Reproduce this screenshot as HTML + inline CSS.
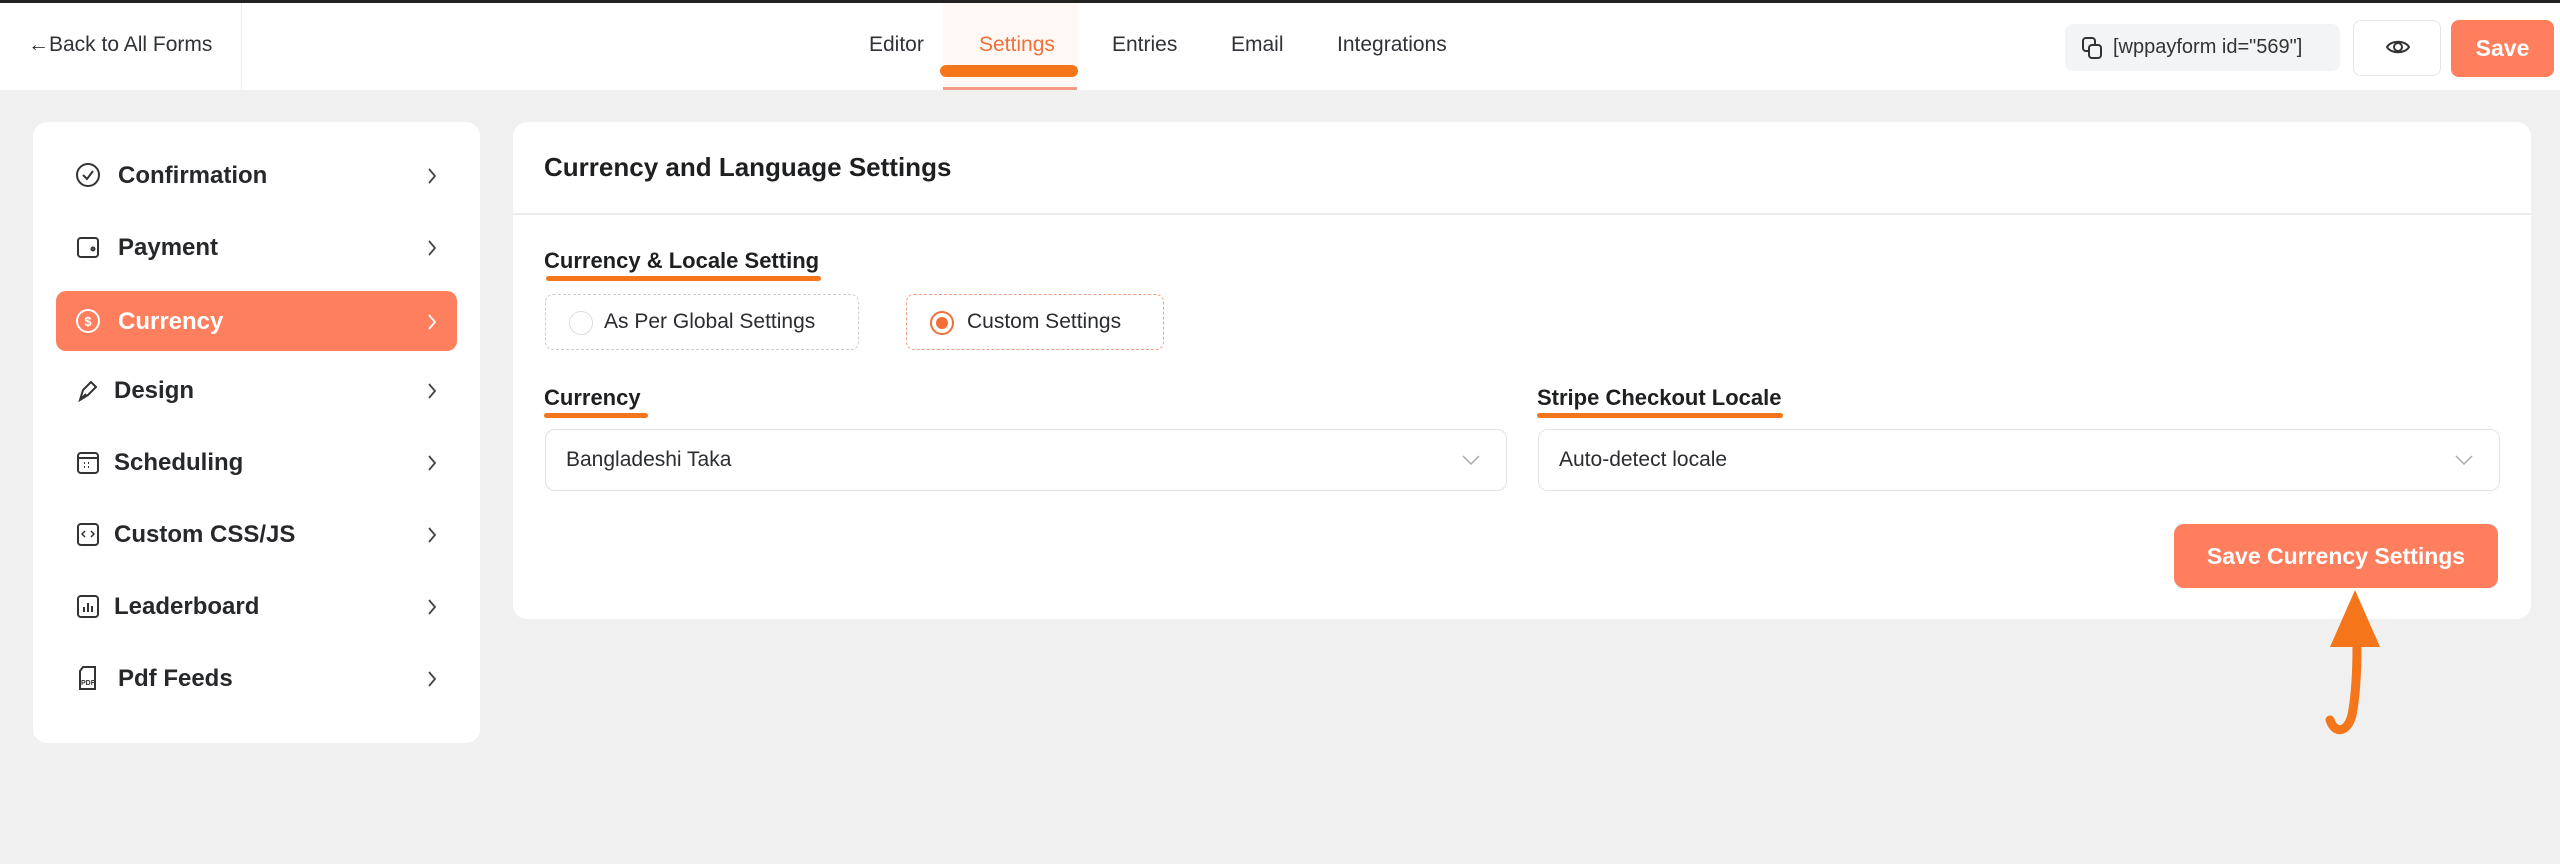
<!DOCTYPE html>
<html><head><meta charset="utf-8"><style>
*{box-sizing:border-box;margin:0;padding:0}
body{width:2560px;height:864px;background:#f0f0f0;font-family:"Liberation Sans",sans-serif;color:#1e1f21;position:relative;overflow:hidden}
.a{position:absolute}
.top{left:0;top:0;width:2560px;height:90px;background:#fff;border-top:3px solid #222}
.tab{top:30px;font-size:21px;color:#2f3237}
.side{left:33px;top:122px;width:447px;height:621px;background:#fff;border-radius:14px}
.it{left:56px;width:401px;height:60px;border-radius:10px;font-size:24px;font-weight:bold;color:#26282c}
.it span.t{position:absolute;left:62px;top:17px}
.it .ch{position:absolute;left:370px;top:21px}
.it .ic{position:absolute;left:18px;top:16px}
.card{left:513px;top:122px;width:2018px;height:497px;background:#fff;border-radius:14px}
.lbl{font-size:22px;font-weight:bold;color:#1e1f21}
.ul{height:5px;background:#f5761a;border-radius:3px}
.radio{height:56px;border:1.5px dashed #d0cbc8;border-radius:8px;font-size:21px;color:#2a2c30}
.sel{height:62px;border:1.5px solid #e2e2e2;border-radius:10px;font-size:21px;color:#2a2c30}
</style></head><body>
<div class="a top">
 <div class="a" style="left:0;top:0;width:242px;height:87px;border-right:1px solid #eee"></div>
 <div class="a" style="left:28px;top:30px;font-size:21px;color:#2f3237">&#8592;Back to All Forms</div>
 <div class="a" style="left:943px;top:0;width:134px;height:87px;background:#fff8f4"></div>
 <div class="a tab" style="left:869px">Editor</div>
 <div class="a tab" style="left:979px;color:#f26f3a">Settings</div>
 <div class="a" style="left:940px;top:62px;width:138px;height:12px;background:#f5761a;border-radius:6px"></div>
 <div class="a" style="left:943px;top:84px;width:134px;height:3px;background:#f39b85"></div>
 <div class="a tab" style="left:1112px">Entries</div>
 <div class="a tab" style="left:1231px">Email</div>
 <div class="a tab" style="left:1337px">Integrations</div>
 <div class="a" style="left:2065px;top:21px;width:275px;height:47px;background:#f3f4f5;border-radius:8px;font-size:19px;color:#333">
  <svg class="a" style="left:16px;top:12px" width="22" height="24" viewBox="0 0 22 24" fill="none" stroke="#333" stroke-width="2"><rect x="2" y="2" width="12" height="13" rx="3"/><rect x="8" y="9" width="12" height="13" rx="3" fill="#f3f4f5"/></svg>
  <span class="a" style="left:48px;top:12px;font-size:20px">[wppayform id="569"]</span></div>
 <div class="a" style="left:2353px;top:17px;width:88px;height:56px;border:1.5px solid #e4e4e4;border-radius:8px">
  <svg class="a" style="left:31px;top:15px" width="26" height="22" viewBox="0 0 26 22" fill="none" stroke="#333" stroke-width="2"><path d="M2 11C6 4 20 4 24 11C20 18 6 18 2 11Z"/><circle cx="13" cy="11" r="4"/></svg></div>
 <div class="a" style="left:2451px;top:17px;width:103px;height:57px;background:#fe7e5e;border-radius:8px;color:#fff;font-size:23px;font-weight:bold;text-align:center;line-height:57px">Save</div>
</div>

<div class="a side"></div>
<div class="a it" style="top:145px"><svg class="ic" width="28" height="28" viewBox="0 0 28 28" fill="none" stroke="#333" stroke-width="2"><circle cx="14" cy="14" r="11"/><path d="M9 14l4 4 6-8"/></svg><span class="t">Confirmation</span><svg class="ch" width="12" height="20" viewBox="0 0 12 20" fill="none" stroke="#444" stroke-width="1.8"><path d="M3 3l6 7-6 7"/></svg></div>
<div class="a it" style="top:217px"><svg class="ic" width="28" height="28" viewBox="0 0 28 28" fill="none" stroke="#333" stroke-width="2"><rect x="4" y="5" width="20" height="19" rx="3"/><circle cx="19" cy="16" r="1.5"/></svg><span class="t">Payment</span><svg class="ch" width="12" height="20" viewBox="0 0 12 20" fill="none" stroke="#444" stroke-width="1.8"><path d="M3 3l6 7-6 7"/></svg></div>
<div class="a it" style="top:291px;background:#fe7f5e;color:#fff"><svg class="ic" width="28" height="28" viewBox="0 0 28 28" fill="none" stroke="#fff" stroke-width="2"><circle cx="14" cy="14" r="11"/><text x="14" y="19" font-size="13" text-anchor="middle" fill="#fff" stroke="none">$</text></svg><span class="t">Currency</span><svg class="ch" width="12" height="20" viewBox="0 0 12 20" fill="none" stroke="#fff" stroke-width="1.8"><path d="M3 3l6 7-6 7"/></svg></div>
<div class="a it" style="top:360px"><svg class="ic" width="28" height="28" viewBox="0 0 28 28" fill="none" stroke="#333" stroke-width="2"><path d="M6 24l3-10 8-8 5 5-8 8z M6 24l6-6"/></svg><span class="t" style="left:58px">Design</span><svg class="ch" width="12" height="20" viewBox="0 0 12 20" fill="none" stroke="#444" stroke-width="1.8"><path d="M3 3l6 7-6 7"/></svg></div>
<div class="a it" style="top:432px"><svg class="ic" width="28" height="28" viewBox="0 0 28 28" fill="none" stroke="#333" stroke-width="2"><rect x="4" y="5" width="20" height="20" rx="3"/><path d="M4 10h20M10 15h1M14 15h1M10 19h1M14 19h1"/></svg><span class="t" style="left:58px">Scheduling</span><svg class="ch" width="12" height="20" viewBox="0 0 12 20" fill="none" stroke="#444" stroke-width="1.8"><path d="M3 3l6 7-6 7"/></svg></div>
<div class="a it" style="top:504px"><svg class="ic" width="28" height="28" viewBox="0 0 28 28" fill="none" stroke="#333" stroke-width="2"><rect x="4" y="4" width="20" height="21" rx="3"/><path d="M11 11l-3 3 3 3M17 11l3 3-3 3" stroke-width="1.5"/></svg><span class="t" style="left:58px">Custom CSS/JS</span><svg class="ch" width="12" height="20" viewBox="0 0 12 20" fill="none" stroke="#444" stroke-width="1.8"><path d="M3 3l6 7-6 7"/></svg></div>
<div class="a it" style="top:576px"><svg class="ic" width="28" height="28" viewBox="0 0 28 28" fill="none" stroke="#333" stroke-width="2"><rect x="4" y="4" width="20" height="21" rx="3"/><path d="M10 20v-5M14 20v-9M18 20v-6"/></svg><span class="t" style="left:58px">Leaderboard</span><svg class="ch" width="12" height="20" viewBox="0 0 12 20" fill="none" stroke="#444" stroke-width="1.8"><path d="M3 3l6 7-6 7"/></svg></div>
<div class="a it" style="top:648px"><svg class="ic" width="28" height="28" viewBox="0 0 28 28" fill="none" stroke="#333" stroke-width="2"><path d="M9 3h12v22H6V7z"/><text x="14" y="21" font-size="7" text-anchor="middle" fill="#333" stroke="none">PDF</text></svg><span class="t">Pdf Feeds</span><svg class="ch" width="12" height="20" viewBox="0 0 12 20" fill="none" stroke="#444" stroke-width="1.8"><path d="M3 3l6 7-6 7"/></svg></div>

<div class="a card"></div>
<div class="a" style="left:544px;top:152px;font-size:26px;font-weight:bold">Currency and Language Settings</div>
<div class="a" style="left:513px;top:213px;width:2018px;height:1.5px;background:#ececec"></div>
<div class="a lbl" style="left:544px;top:248px">Currency &amp; Locale Setting</div>
<div class="a ul" style="left:546px;top:276px;width:275px"></div>
<div class="a radio" style="left:545px;top:294px;width:314px"><div class="a" style="left:23px;top:16px;width:24px;height:24px;border:1.5px solid #ddd;border-radius:50%"></div><span class="a" style="left:58px;top:15px">As Per Global Settings</span></div>
<div class="a radio" style="left:906px;top:294px;width:258px;border-color:#f0a080"><div class="a" style="left:23px;top:16px;width:24px;height:24px;border:2px solid #f26f3a;border-radius:50%"><div class="a" style="left:4px;top:4px;width:12px;height:12px;background:#f26f3a;border-radius:50%"></div></div><span class="a" style="left:60px;top:15px">Custom Settings</span></div>
<div class="a lbl" style="left:544px;top:385px">Currency</div>
<div class="a ul" style="left:544px;top:413px;width:104px"></div>
<div class="a lbl" style="left:1537px;top:385px">Stripe Checkout Locale</div>
<div class="a ul" style="left:1537px;top:413px;width:246px"></div>
<div class="a sel" style="left:545px;top:429px;width:962px"><span class="a" style="left:20px;top:18px">Bangladeshi Taka</span><svg class="a" style="left:915px;top:24px" width="20" height="12" viewBox="0 0 20 12" fill="none" stroke="#aaa" stroke-width="1.5"><path d="M2 2l8 8 8-8"/></svg></div>
<div class="a sel" style="left:1538px;top:429px;width:962px"><span class="a" style="left:20px;top:18px">Auto-detect locale</span><svg class="a" style="left:915px;top:24px" width="20" height="12" viewBox="0 0 20 12" fill="none" stroke="#aaa" stroke-width="1.5"><path d="M2 2l8 8 8-8"/></svg></div>
<div class="a" style="left:2174px;top:524px;width:324px;height:64px;background:#fe7e5e;border-radius:10px;color:#fff;font-size:23px;font-weight:bold;text-align:center;line-height:64px">Save Currency Settings</div>
<svg class="a" style="left:2300px;top:585px" width="100" height="160" viewBox="2300 585 100 160">
<path d="M2355 590L2380 647L2330 647Z" fill="#f5761a"/>
<path d="M2357 645C2357 670 2356 695 2352 715C2348 732 2335 735 2330 720" fill="none" stroke="#f5761a" stroke-width="9" stroke-linecap="round"/>
</svg>
</body></html>
